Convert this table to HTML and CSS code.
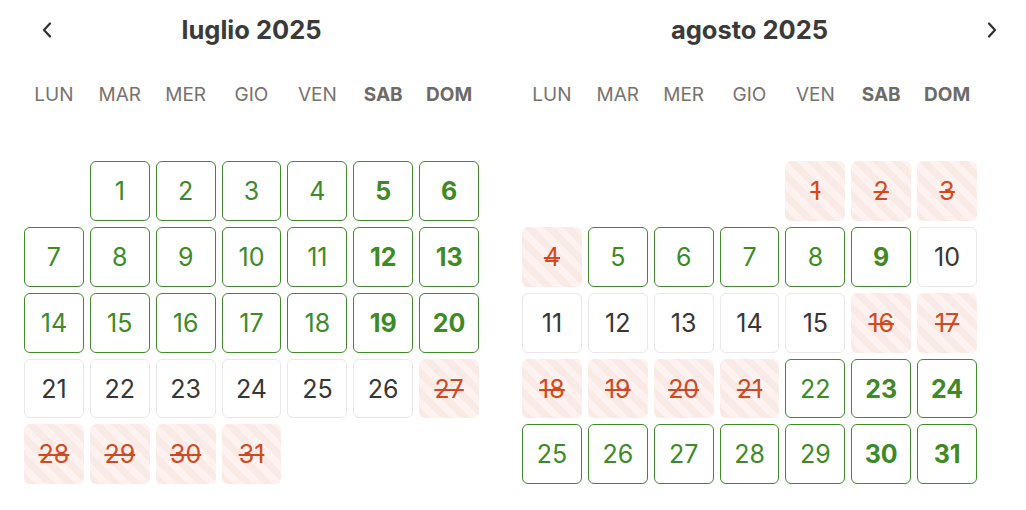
FILE: index.html
```html
<!DOCTYPE html>
<html lang="it">
<head>
  <meta charset="UTF-8">
  <meta name="viewport" content="width=device-width, initial-scale=1.0">
  <title>Disponibilità</title>
  <link rel="stylesheet" href="styles.css">
</head>
<body>
  <div class="calendar">
    <button class="nav-button nav-prev" aria-label="Mese precedente">
      <svg width="10" height="16" viewBox="0 0 10 16"><path d="M8 1.5 L2 8 L8 14.5" fill="none" stroke="#2f2f2f" stroke-width="2.2" stroke-linecap="round" stroke-linejoin="round"/></svg>
    </button>
    <button class="nav-button nav-next" aria-label="Mese successivo">
      <svg width="10" height="16" viewBox="0 0 10 16"><path d="M2 1.5 L8 8 L2 14.5" fill="none" stroke="#2f2f2f" stroke-width="2.2" stroke-linecap="round" stroke-linejoin="round"/></svg>
    </button>

    <!-- luglio -->
    <div class="month">
      <h2 class="month-title">luglio 2025</h2>
      <div class="weekdays">
        <span>LUN</span><span>MAR</span><span>MER</span><span>GIO</span><span>VEN</span>
        <span class="weekend">SAB</span><span class="weekend">DOM</span>
      </div>
      <div class="days">
        <div class="day empty"></div>
        <div class="day open">1</div>
        <div class="day open">2</div>
        <div class="day open">3</div>
        <div class="day open">4</div>
        <div class="day open weekend">5</div>
        <div class="day open weekend">6</div>

        <div class="day open">7</div>
        <div class="day open">8</div>
        <div class="day open">9</div>
        <div class="day open">10</div>
        <div class="day open">11</div>
        <div class="day open weekend">12</div>
        <div class="day open weekend">13</div>

        <div class="day open">14</div>
        <div class="day open">15</div>
        <div class="day open">16</div>
        <div class="day open">17</div>
        <div class="day open">18</div>
        <div class="day open weekend">19</div>
        <div class="day open weekend">20</div>

        <div class="day">21</div>
        <div class="day">22</div>
        <div class="day">23</div>
        <div class="day">24</div>
        <div class="day">25</div>
        <div class="day">26</div>
        <div class="day closed">27</div>

        <div class="day closed">28</div>
        <div class="day closed">29</div>
        <div class="day closed">30</div>
        <div class="day closed">31</div>
      </div>
    </div>

    <!-- agosto -->
    <div class="month">
      <h2 class="month-title">agosto 2025</h2>
      <div class="weekdays">
        <span>LUN</span><span>MAR</span><span>MER</span><span>GIO</span><span>VEN</span>
        <span class="weekend">SAB</span><span class="weekend">DOM</span>
      </div>
      <div class="days">
        <div class="day empty"></div>
        <div class="day empty"></div>
        <div class="day empty"></div>
        <div class="day empty"></div>
        <div class="day closed">1</div>
        <div class="day closed">2</div>
        <div class="day closed">3</div>

        <div class="day closed">4</div>
        <div class="day open">5</div>
        <div class="day open">6</div>
        <div class="day open">7</div>
        <div class="day open">8</div>
        <div class="day open weekend">9</div>
        <div class="day">10</div>

        <div class="day">11</div>
        <div class="day">12</div>
        <div class="day">13</div>
        <div class="day">14</div>
        <div class="day">15</div>
        <div class="day closed">16</div>
        <div class="day closed">17</div>

        <div class="day closed">18</div>
        <div class="day closed">19</div>
        <div class="day closed">20</div>
        <div class="day closed">21</div>
        <div class="day open">22</div>
        <div class="day open weekend">23</div>
        <div class="day open weekend">24</div>

        <div class="day open">25</div>
        <div class="day open">26</div>
        <div class="day open">27</div>
        <div class="day open">28</div>
        <div class="day open">29</div>
        <div class="day open weekend">30</div>
        <div class="day open weekend">31</div>
      </div>
    </div>
  </div>
</body>
</html>
```

FILE: styles.css
```css
body {
  font-family: 'Inter', 'Noto Sans', sans-serif;
  background-color: #ffffff;
  color: #333333;
  margin: 0;
  padding: 0;
}

.calendar {
  position: relative;
  display: flex;
  gap: 43px;
  padding: 0 24px;
}

.nav-button {
  position: absolute;
  top: 22px;
  width: 10px;
  height: 16px;
  padding: 0;
  border: none;
  background: none;
  cursor: pointer;
  display: flex;
}

.nav-prev {
  left: 42px;
}

.nav-next {
  left: 987px;
}

.month {
  width: 455px;
}

.month-title {
  margin: 0;
  height: 60px;
  line-height: 60px;
  text-align: center;
  font-size: 25.5px;
  font-weight: 700;
  color: #3a3a3a;
}

.weekdays {
  display: grid;
  grid-template-columns: repeat(7, 1fr);
  gap: 6px;
  margin-top: 5px;
  height: 60px;
  line-height: 60px;
  text-align: center;
  font-size: 19px;
  color: #76736f;
}

.weekdays .weekend {
  font-weight: 700;
  color: #6e6a66;
}

.days {
  display: grid;
  grid-template-columns: repeat(7, 1fr);
  gap: 6px;
  margin-top: 36px;
}

.day {
  aspect-ratio: 1;
  box-sizing: border-box;
  display: flex;
  align-items: center;
  justify-content: center;
  border: 1px solid #e8e8e8;
  border-radius: 6px;
  font-size: 25px;
  color: #363636;
}

.day.empty {
  border-color: transparent;
}

.day.open {
  border-color: #3f8a2a;
  color: #3d8a26;
}

.day.weekend {
  font-weight: 700;
}

.day.closed {
  border-color: transparent;
  color: #d2491f;
  text-decoration: line-through;
  text-decoration-thickness: 2px;
  background: repeating-linear-gradient(45deg, #faeae6 0, #faeae6 7px, #fdf2ef 7px, #fdf2ef 14px);
}
```
